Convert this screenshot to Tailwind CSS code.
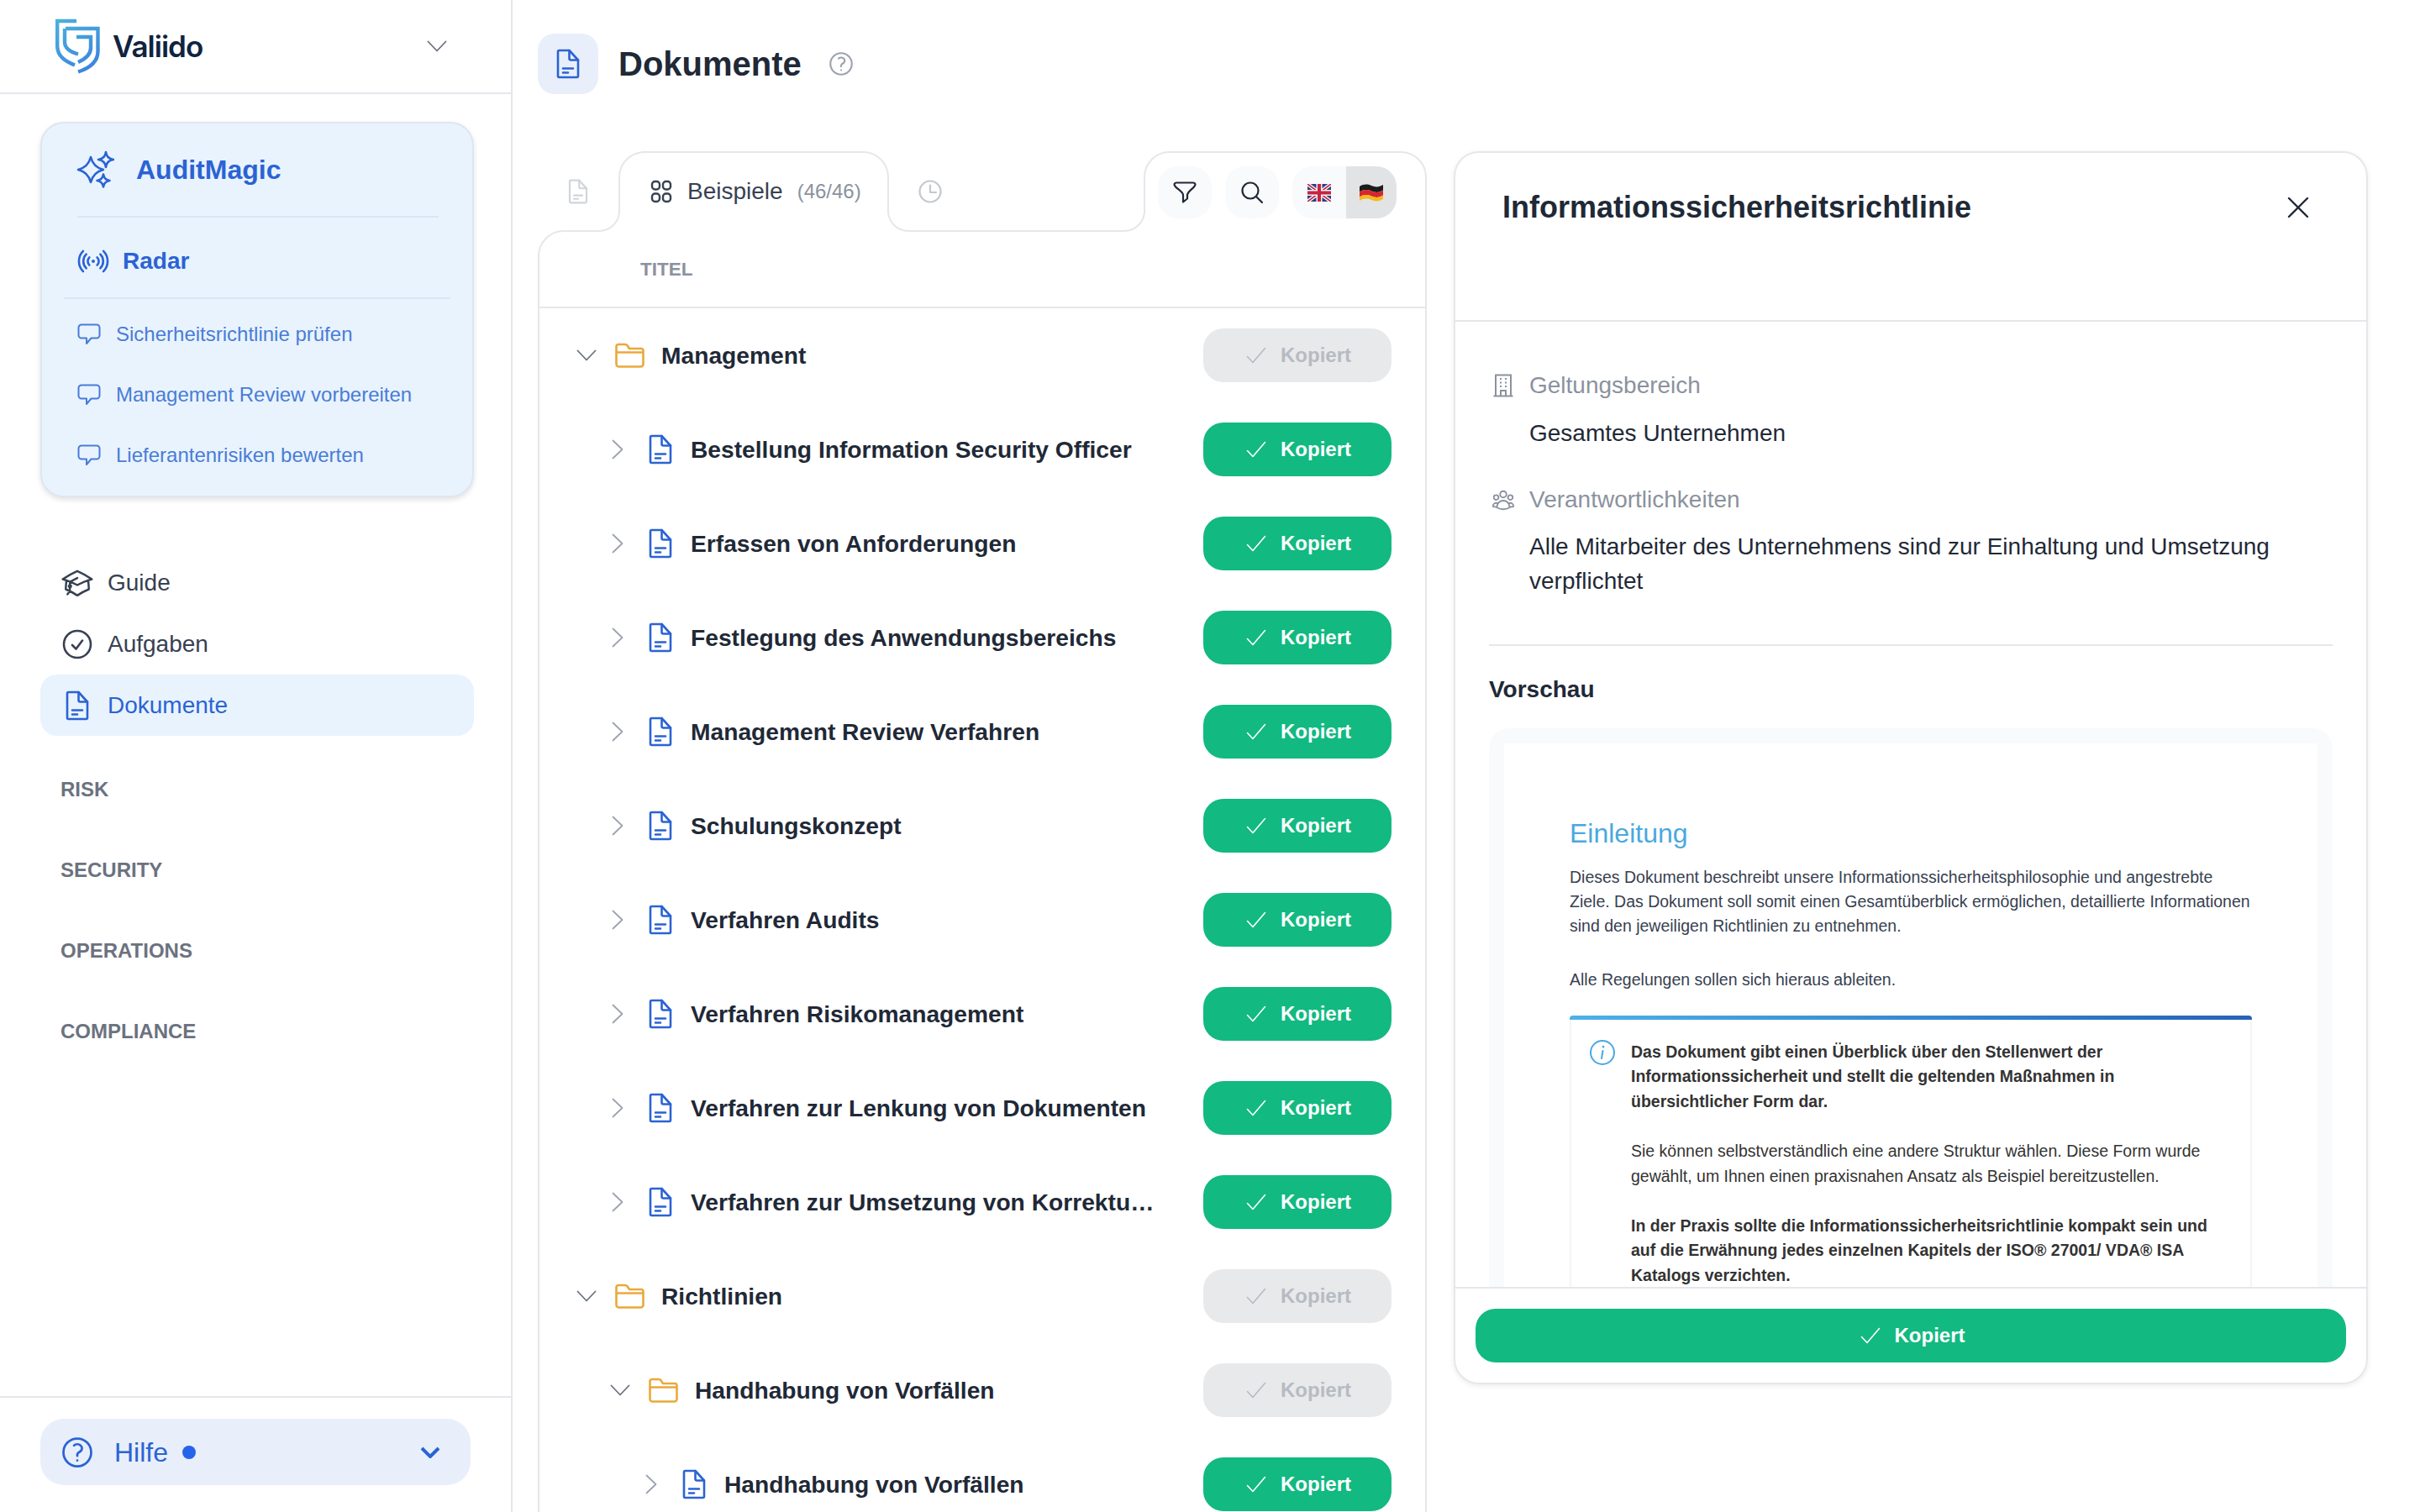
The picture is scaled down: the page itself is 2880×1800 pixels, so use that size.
<!doctype html>
<html lang="de">
<head>
  <meta charset="UTF-8">
  <meta name="viewport" content="width=device-width, initial-scale=1.0">
  <title>Dokumente</title>
  <script src="https://cdn.jsdelivr.net/npm/@tailwindcss/browser@4"></script>
</head>
<body class="h-[1800px] w-[2880px] overflow-hidden bg-white font-['Liberation_Sans',sans-serif] text-[#1f2937]">

<!-- shared icons -->
<svg class="hidden">
  <defs>
    <symbol id="doc" viewBox="0 0 28 36" fill="none" stroke="currentColor" stroke-width="2.6" stroke-linejoin="round" stroke-linecap="round">
      <path d="M3.5 2H15.5L26 13.5V32.5A1.5 1.5 0 0 1 24.5 34H3.5A1.5 1.5 0 0 1 2 32.5V3.5A1.5 1.5 0 0 1 3.5 2Z"/>
      <path d="M15.5 2V11.5A2 2 0 0 0 17.5 13.5H26"/>
      <path d="M8 23.5H20M8 28.5H14"/>
    </symbol>
    <symbol id="folder" viewBox="0 0 35 30" fill="none" stroke="currentColor" stroke-width="2.6" stroke-linejoin="round">
      <path d="M4 2H12A3 3 0 0 1 14.5 3.3L17 7H31A2.5 2.5 0 0 1 33.5 9.5V25.5A3 3 0 0 1 30.5 28.5H4.5A3 3 0 0 1 1.5 25.5V4.5A2.5 2.5 0 0 1 4 2Z"/>
      <path d="M1.5 11.5H33.5"/>
    </symbol>
    <symbol id="tick" viewBox="0 0 24 20" fill="none" stroke="currentColor" stroke-width="1.6" stroke-linecap="round" stroke-linejoin="round">
      <path d="M1.5 11.5L8 18.5L22.5 1.5"/>
    </symbol>
    <symbol id="down" viewBox="0 0 24 14" fill="none" stroke="currentColor" stroke-width="1.8" stroke-linecap="round" stroke-linejoin="round">
      <path d="M1.5 1.5L12 12.5L22.5 1.5"/>
    </symbol>
    <symbol id="right" viewBox="0 0 14 24" fill="none" stroke="currentColor" stroke-width="1.8" stroke-linecap="round" stroke-linejoin="round">
      <path d="M1.5 1.5L12.5 12L1.5 22.5"/>
    </symbol>
    <symbol id="bubble" viewBox="0 0 28 26" fill="none" stroke="currentColor" stroke-width="2" stroke-linejoin="round">
      <path d="M5 1.5H23A3.5 3.5 0 0 1 26.5 5V14A3.5 3.5 0 0 1 23 17.5H16.5L11 24V17.5H5A3.5 3.5 0 0 1 1.5 14V5A3.5 3.5 0 0 1 5 1.5Z"/>
    </symbol>
    <symbol id="question" viewBox="0 0 24 24" fill="none" stroke="currentColor" stroke-width="1.5" stroke-linecap="round" stroke-linejoin="round">
      <path d="M9.879 7.519c1.171-1.025 3.071-1.025 4.242 0 1.172 1.025 1.172 2.687 0 3.712-.203.179-.43.326-.67.442-.745.361-1.45.999-1.45 1.827v.75M21 12a9 9 0 11-18 0 9 9 0 0118 0zm-9 5.25h.008v.008H12v-.008z"/>
    </symbol>
    <clipPath id="flagWave">
      <path d="M0 3C5 0 9 0 14 2S23 4 28 1V18C23 21 19 21 14 19S5 17 0 20Z"/>
    </clipPath>
  </defs>
</svg>

<div class="flex h-[1800px]">

  <!-- sidebar -->
  <aside class="flex h-full w-[610px] shrink-0 flex-col border-r-2 border-[#e5e7eb]">
    <div class="flex h-[112px] shrink-0 items-center border-b-2 border-[#e5e7eb] pl-[66px] pr-[76px]">
      <svg class="h-[66px] w-[53px]" viewBox="0 0 53 66" fill="none" stroke="url(#logoGrad)" stroke-width="4.4">
        <defs>
          <linearGradient id="logoGrad" gradientUnits="userSpaceOnUse" x1="0" y1="0" x2="40" y2="66">
            <stop offset="0" stop-color="#4db2dc"/>
            <stop offset="1" stop-color="#3a82de"/>
          </linearGradient>
        </defs>
        <path d="M25 3H2.2V33C2.2 45 12 51 23 55.5"/>
        <path d="M12 12H50.5V39C50.5 51 41 59 27 63.5"/>
        <path d="M11 12V28C11 36 18 40 27 42.5"/>
        <path d="M25 22H42V35C42 43 36 48 27 52"/>
      </svg>
      <span class="ml-[15px] font-['Inter',sans-serif] text-[35px] font-semibold tracking-[-1px] text-[#0f2440]">Valiido</span>
      <svg class="ml-auto h-[14px] w-[24px] text-[#6b7280]"><use href="#down"/></svg>
    </div>

    <div class="ml-[48px] mr-[44px] mt-[33px] h-[447px] shrink-0 rounded-[28px] border-2 border-[#dfe6f0] bg-[#e8f3fe] text-[#2b63d4] shadow-[0_3px_6px_rgba(0,0,0,0.12)]">
      <div class="ml-[42px] mr-[40px] flex h-[112px] items-center border-b-2 border-[#dbe6f4] pb-[1px]">
        <svg class="-ml-[2px] h-[46px] w-[46px]" viewBox="0 0 46 46" fill="none" stroke="currentColor" stroke-width="2.6" stroke-linejoin="round">
          <path d="M18 8Q21 20 33 23Q21 26 18 38Q15 26 3 23Q15 20 18 8Z"/>
          <path d="M36 2Q37 10 45 11Q37 12 36 20Q35 12 27 11Q35 10 36 2Z"/>
          <path d="M33 28.5Q34 35 40.5 36Q34 37 33 43.5Q32 37 25.5 36Q32 35 33 28.5Z"/>
        </svg>
        <span class="ml-[26px] text-[32px] font-bold">AuditMagic</span>
      </div>
      <div class="mx-[26px] flex h-[97px] items-center border-b-2 border-[#dbe6f4] pl-[14px] pt-[8px]">
        <svg class="h-[42px] w-[42px]" viewBox="0 0 24 24" fill="none" stroke="currentColor" stroke-width="1.5" stroke-linecap="round" stroke-linejoin="round"><path d="M9.348 14.651a3.75 3.75 0 010-5.303m5.304 0a3.75 3.75 0 010 5.303m-7.425 2.122a6.75 6.75 0 010-9.546m9.546 0a6.75 6.75 0 010 9.546M5.106 18.894c-3.808-3.808-3.808-9.98 0-13.789m13.788 0c3.808 3.808 3.808 9.981 0 13.79M12 12h.008v.007H12V12zm.375 0a.375.375 0 11-.75 0 .375.375 0 01.75 0z"/></svg>
        <span class="ml-[14px] text-[28px] font-bold">Radar</span>
      </div>
      <div class="pt-[6px] text-[24px] text-[#4a7cd6]">
        <div class="flex h-[72px] items-center pl-[42px]"><svg class="h-[26px] w-[28px]"><use href="#bubble"/></svg><span class="ml-[18px]">Sicherheitsrichtlinie prüfen</span></div>
        <div class="flex h-[72px] items-center pl-[42px]"><svg class="h-[26px] w-[28px]"><use href="#bubble"/></svg><span class="ml-[18px]">Management Review vorbereiten</span></div>
        <div class="flex h-[72px] items-center pl-[42px]"><svg class="h-[26px] w-[28px]"><use href="#bubble"/></svg><span class="ml-[18px]">Lieferantenrisiken bewerten</span></div>
      </div>
    </div>

    <nav class="ml-[48px] mr-[44px] mt-[65px] text-[28px]">
      <div class="flex h-[73px] items-center text-[#374151]">
        <svg class="ml-[24px] h-[40px] w-[40px]" viewBox="0 0 24 24" fill="none" stroke="currentColor" stroke-width="1.5" stroke-linecap="round" stroke-linejoin="round"><path d="M4.26 10.147a60.436 60.436 0 00-.491 6.347A48.627 48.627 0 0112 20.904a48.627 48.627 0 018.232-4.41 60.46 60.46 0 00-.491-6.347m-15.482 0a50.57 50.57 0 00-2.658-.813A59.905 59.905 0 0112 3.493a59.902 59.902 0 0110.399 5.84c-.896.248-1.783.52-2.658.814m-15.482 0A50.697 50.697 0 0112 13.489a50.702 50.702 0 017.74-3.342M6.75 15a.75.75 0 100-1.5.75.75 0 000 1.5zm0 0v-3.675A55.378 55.378 0 0112 8.443m-7.007 11.55A5.981 5.981 0 006.75 15.75v-1.5"/></svg>
        <span class="ml-[16px]">Guide</span>
      </div>
      <div class="flex h-[73px] items-center text-[#374151]">
        <svg class="ml-[24px] h-[40px] w-[40px]" viewBox="0 0 40 40" fill="none" stroke="currentColor" stroke-width="2.6" stroke-linecap="round" stroke-linejoin="round"><circle cx="20" cy="20" r="16"/><path d="M14 21L18.5 25.5L26 15.5"/></svg>
        <span class="ml-[16px]">Aufgaben</span>
      </div>
      <div class="flex h-[73px] items-center rounded-[20px] bg-[#e8f3fe] text-[#2b63d4]">
        <svg class="ml-[30px] h-[36px] w-[28px]"><use href="#doc"/></svg>
        <span class="ml-[22px]">Dokumente</span>
      </div>
    </nav>

    <div class="mx-[72px] mt-[16px] text-[24px] font-bold text-[#6b7280]">
      <div class="flex h-[96px] items-center">RISK</div>
      <div class="flex h-[96px] items-center">SECURITY</div>
      <div class="flex h-[96px] items-center">OPERATIONS</div>
      <div class="flex h-[96px] items-center">COMPLIANCE</div>
    </div>

    <div class="mt-auto h-[138px] shrink-0 border-t-2 border-[#e5e7eb] pt-[25px]">
      <div class="mx-[48px] flex h-[79px] w-[512px] items-center rounded-[28px] bg-[#e8effb] pl-[22px] pr-[36px] text-[#2b63d4]">
        <svg class="h-[44px] w-[44px]"><use href="#question"/></svg>
        <span class="ml-[22px] text-[32px]">Hilfe</span>
        <span class="ml-[17px] h-[16px] w-[16px] rounded-full bg-[#2563eb]"></span>
        <svg class="ml-auto h-[14px] w-[24px]" viewBox="0 0 24 14" fill="none" stroke="currentColor" stroke-width="4"><path d="M2 2L12 12L22 2"/></svg>
      </div>
    </div>
  </aside>

  <!-- documents -->
  <main class="flex h-full w-[1088px] shrink-0 flex-col pl-[30px]">
    <div class="flex h-[180px] shrink-0 items-start pt-[40px]">
      <div class="flex h-[72px] w-[72px] items-center justify-center rounded-[20px] bg-[#e8effb] text-[#2b63d4]">
        <svg class="h-[36px] w-[28px]"><use href="#doc"/></svg>
      </div>
      <h1 class="ml-[24px] flex h-[72px] items-center text-[40px] font-bold">Dokumente</h1>
      <svg class="ml-[30px] mt-[19px] h-[34px] w-[34px] text-[#9ca3af]"><use href="#question"/></svg>
    </div>

    <div class="relative h-[96px] w-[1058px] shrink-0">
      <svg class="absolute left-0 top-0 h-[188px] w-[1058px]" viewBox="0 0 1058 188" fill="none" stroke="#e5e7eb" stroke-width="2">
        <path d="M1 187V125A30 30 0 0 1 31 95H73A24 24 0 0 0 97 71V31A30 30 0 0 1 127 1H387A30 30 0 0 1 417 31V71A24 24 0 0 0 441 95H698A24 24 0 0 0 722 71V31A30 30 0 0 1 752 1H1027A30 30 0 0 1 1057 31V96"/>
      </svg>
      <div class="relative flex h-full items-center">
        <svg class="ml-[36px] h-[30px] w-[24px] text-[#d1d5db]"><use href="#doc"/></svg>
        <div class="ml-[74px] flex items-center">
          <svg class="h-[28px] w-[26px] text-[#374151]" viewBox="0 0 26 28" fill="none" stroke="currentColor" stroke-width="2.4"><rect x="2" y="2" width="9" height="9.5" rx="3.5"/><rect x="15" y="2" width="9" height="9.5" rx="3.5"/><rect x="2" y="16.5" width="9" height="9.5" rx="3.5"/><rect x="15" y="16.5" width="9" height="9.5" rx="3.5"/></svg>
          <span class="ml-[18px] text-[28px] text-[#374151]">Beispiele</span>
          <span class="ml-[17px] text-[24px] text-[#8b929e]">(46/46)</span>
        </div>
        <svg class="ml-[68px] h-[28px] w-[28px] text-[#c4c8cf]" viewBox="0 0 28 28" fill="none" stroke="currentColor" stroke-width="2.2" stroke-linecap="round" stroke-linejoin="round"><circle cx="14" cy="14" r="12.5"/><path d="M14 6.5V15H21"/></svg>
        <div class="absolute left-[738px] top-[18px] flex gap-[16px]">
          <div class="flex h-[62px] w-[64px] items-center justify-center rounded-[24px] bg-[#f8fafc] text-[#1f2937]">
            <svg class="h-[26px] w-[28px]" viewBox="0 0 28 26" fill="none" stroke="currentColor" stroke-width="2.2" stroke-linejoin="round" stroke-linecap="round"><path d="M4 1.5H24C26 1.5 27 3 26 5C24 9 18 11 17 16V20.5L12 24.5V16C11 11 4 9 2 5C1 3 2 1.5 4 1.5Z"/></svg>
          </div>
          <div class="flex h-[62px] w-[64px] items-center justify-center rounded-[24px] bg-[#f8fafc] text-[#1f2937]">
            <svg class="h-[26px] w-[26px]" viewBox="0 0 26 26" fill="none" stroke="currentColor" stroke-width="2.2" stroke-linecap="round"><circle cx="11" cy="11" r="9.5"/><path d="M18 18L25 25"/></svg>
          </div>
          <div class="flex h-[62px] w-[124px] overflow-hidden rounded-[24px] bg-[#f8fafc]">
            <div class="flex w-[64px] items-center justify-center">
              <svg class="h-[21px] w-[28px]" viewBox="0 0 28 21">
                <g clip-path="url(#flagWave)">
                  <rect width="28" height="21" fill="#2f3d85"/>
                  <path d="M0 0L28 21M28 0L0 21" stroke="#f1f1f5" stroke-width="4.4"/>
                  <path d="M0 0L28 21M28 0L0 21" stroke="#c8243f" stroke-width="1.6"/>
                  <path d="M14 0V21M0 10.5H28" stroke="#f1f1f5" stroke-width="7"/>
                  <path d="M14 0V21M0 10.5H28" stroke="#c8243f" stroke-width="4"/>
                </g>
              </svg>
            </div>
            <div class="flex w-[60px] items-center justify-center bg-[#e2e3e5]">
              <svg class="h-[21px] w-[28px]" viewBox="0 0 28 21">
                <path d="M0 3C5 0 9 0 14 2S23 4 28 1V7.5C23 10.5 19 10.5 14 8.5S5 6.5 0 9.5Z" fill="#1c1c1c"/>
                <path d="M0 9.5C5 6.5 9 6.5 14 8.5S23 10.5 28 7.5V13.5C23 16.5 19 16.5 14 14.5S5 12.5 0 15.5Z" fill="#d8262c"/>
                <path d="M0 15.5C5 12.5 9 12.5 14 14.5S23 16.5 28 13.5V18C23 21 19 21 14 19S5 17 0 20Z" fill="#f6b91e"/>
              </svg>
            </div>
          </div>
        </div>
      </div>
    </div>

    <div class="min-h-0 w-[1058px] flex-1 border-r-2 border-[#e5e7eb]">
      <div class="flex h-[91px] items-center border-b-2 border-[#e5e7eb] pl-[122px] text-[22.5px] font-bold text-[#8b929e]">TITEL</div>

      <div class="border-l-2 border-[#e5e7eb] text-[28.2px] font-bold">
        <div class="flex h-[112px] items-center pl-[44px] pr-[40px]">
          <svg class="h-[14px] w-[24px] text-[#6b7280]"><use href="#down"/></svg>
          <svg class="ml-[22px] h-[30px] w-[35px] text-[#e9a93b]"><use href="#folder"/></svg>
          <span class="ml-[20px]">Management</span>
          <button class="ml-auto flex h-[64px] w-[224px] items-center justify-center rounded-[24px] bg-[#e8e9eb] pl-[3px] text-[24px] font-bold text-[#b6bbc3]"><svg class="mr-[17px] h-[20px] w-[24px]"><use href="#tick"/></svg>Kopiert</button>
        </div>

        <div class="flex h-[112px] items-center pl-[86px] pr-[40px]">
          <svg class="h-[24px] w-[14px] text-[#9ca3af]"><use href="#right"/></svg>
          <svg class="ml-[30px] h-[36px] w-[28px] text-[#2b63d4]"><use href="#doc"/></svg>
          <span class="ml-[22px] w-[558px] truncate">Bestellung Information Security Officer</span>
          <button class="ml-auto flex h-[64px] w-[224px] items-center justify-center rounded-[24px] bg-[#12b981] pl-[3px] text-[24px] font-bold text-white"><svg class="mr-[17px] h-[20px] w-[24px]"><use href="#tick"/></svg>Kopiert</button>
        </div>
        <div class="flex h-[112px] items-center pl-[86px] pr-[40px]">
          <svg class="h-[24px] w-[14px] text-[#9ca3af]"><use href="#right"/></svg>
          <svg class="ml-[30px] h-[36px] w-[28px] text-[#2b63d4]"><use href="#doc"/></svg>
          <span class="ml-[22px] w-[558px] truncate">Erfassen von Anforderungen</span>
          <button class="ml-auto flex h-[64px] w-[224px] items-center justify-center rounded-[24px] bg-[#12b981] pl-[3px] text-[24px] font-bold text-white"><svg class="mr-[17px] h-[20px] w-[24px]"><use href="#tick"/></svg>Kopiert</button>
        </div>
        <div class="flex h-[112px] items-center pl-[86px] pr-[40px]">
          <svg class="h-[24px] w-[14px] text-[#9ca3af]"><use href="#right"/></svg>
          <svg class="ml-[30px] h-[36px] w-[28px] text-[#2b63d4]"><use href="#doc"/></svg>
          <span class="ml-[22px] w-[558px] truncate">Festlegung des Anwendungsbereichs</span>
          <button class="ml-auto flex h-[64px] w-[224px] items-center justify-center rounded-[24px] bg-[#12b981] pl-[3px] text-[24px] font-bold text-white"><svg class="mr-[17px] h-[20px] w-[24px]"><use href="#tick"/></svg>Kopiert</button>
        </div>
        <div class="flex h-[112px] items-center pl-[86px] pr-[40px]">
          <svg class="h-[24px] w-[14px] text-[#9ca3af]"><use href="#right"/></svg>
          <svg class="ml-[30px] h-[36px] w-[28px] text-[#2b63d4]"><use href="#doc"/></svg>
          <span class="ml-[22px] w-[558px] truncate">Management Review Verfahren</span>
          <button class="ml-auto flex h-[64px] w-[224px] items-center justify-center rounded-[24px] bg-[#12b981] pl-[3px] text-[24px] font-bold text-white"><svg class="mr-[17px] h-[20px] w-[24px]"><use href="#tick"/></svg>Kopiert</button>
        </div>
        <div class="flex h-[112px] items-center pl-[86px] pr-[40px]">
          <svg class="h-[24px] w-[14px] text-[#9ca3af]"><use href="#right"/></svg>
          <svg class="ml-[30px] h-[36px] w-[28px] text-[#2b63d4]"><use href="#doc"/></svg>
          <span class="ml-[22px] w-[558px] truncate">Schulungskonzept</span>
          <button class="ml-auto flex h-[64px] w-[224px] items-center justify-center rounded-[24px] bg-[#12b981] pl-[3px] text-[24px] font-bold text-white"><svg class="mr-[17px] h-[20px] w-[24px]"><use href="#tick"/></svg>Kopiert</button>
        </div>
        <div class="flex h-[112px] items-center pl-[86px] pr-[40px]">
          <svg class="h-[24px] w-[14px] text-[#9ca3af]"><use href="#right"/></svg>
          <svg class="ml-[30px] h-[36px] w-[28px] text-[#2b63d4]"><use href="#doc"/></svg>
          <span class="ml-[22px] w-[558px] truncate">Verfahren Audits</span>
          <button class="ml-auto flex h-[64px] w-[224px] items-center justify-center rounded-[24px] bg-[#12b981] pl-[3px] text-[24px] font-bold text-white"><svg class="mr-[17px] h-[20px] w-[24px]"><use href="#tick"/></svg>Kopiert</button>
        </div>
        <div class="flex h-[112px] items-center pl-[86px] pr-[40px]">
          <svg class="h-[24px] w-[14px] text-[#9ca3af]"><use href="#right"/></svg>
          <svg class="ml-[30px] h-[36px] w-[28px] text-[#2b63d4]"><use href="#doc"/></svg>
          <span class="ml-[22px] w-[558px] truncate">Verfahren Risikomanagement</span>
          <button class="ml-auto flex h-[64px] w-[224px] items-center justify-center rounded-[24px] bg-[#12b981] pl-[3px] text-[24px] font-bold text-white"><svg class="mr-[17px] h-[20px] w-[24px]"><use href="#tick"/></svg>Kopiert</button>
        </div>
        <div class="flex h-[112px] items-center pl-[86px] pr-[40px]">
          <svg class="h-[24px] w-[14px] text-[#9ca3af]"><use href="#right"/></svg>
          <svg class="ml-[30px] h-[36px] w-[28px] text-[#2b63d4]"><use href="#doc"/></svg>
          <span class="ml-[22px] w-[558px] truncate">Verfahren zur Lenkung von Dokumenten</span>
          <button class="ml-auto flex h-[64px] w-[224px] items-center justify-center rounded-[24px] bg-[#12b981] pl-[3px] text-[24px] font-bold text-white"><svg class="mr-[17px] h-[20px] w-[24px]"><use href="#tick"/></svg>Kopiert</button>
        </div>
        <div class="flex h-[112px] items-center pl-[86px] pr-[40px]">
          <svg class="h-[24px] w-[14px] text-[#9ca3af]"><use href="#right"/></svg>
          <svg class="ml-[30px] h-[36px] w-[28px] text-[#2b63d4]"><use href="#doc"/></svg>
          <span class="ml-[22px] w-[556px] truncate">Verfahren zur Umsetzung von Korrekturmaßnahmen</span>
          <button class="ml-auto flex h-[64px] w-[224px] items-center justify-center rounded-[24px] bg-[#12b981] pl-[3px] text-[24px] font-bold text-white"><svg class="mr-[17px] h-[20px] w-[24px]"><use href="#tick"/></svg>Kopiert</button>
        </div>

        <div class="flex h-[112px] items-center pl-[44px] pr-[40px]">
          <svg class="h-[14px] w-[24px] text-[#6b7280]"><use href="#down"/></svg>
          <svg class="ml-[22px] h-[30px] w-[35px] text-[#e9a93b]"><use href="#folder"/></svg>
          <span class="ml-[20px]">Richtlinien</span>
          <button class="ml-auto flex h-[64px] w-[224px] items-center justify-center rounded-[24px] bg-[#e8e9eb] pl-[3px] text-[24px] font-bold text-[#b6bbc3]"><svg class="mr-[17px] h-[20px] w-[24px]"><use href="#tick"/></svg>Kopiert</button>
        </div>
        <div class="flex h-[112px] items-center pl-[84px] pr-[40px]">
          <svg class="h-[14px] w-[24px] text-[#6b7280]"><use href="#down"/></svg>
          <svg class="ml-[22px] h-[30px] w-[35px] text-[#e9a93b]"><use href="#folder"/></svg>
          <span class="ml-[20px]">Handhabung von Vorfällen</span>
          <button class="ml-auto flex h-[64px] w-[224px] items-center justify-center rounded-[24px] bg-[#e8e9eb] pl-[3px] text-[24px] font-bold text-[#b6bbc3]"><svg class="mr-[17px] h-[20px] w-[24px]"><use href="#tick"/></svg>Kopiert</button>
        </div>
        <div class="flex h-[112px] items-center pl-[126px] pr-[40px]">
          <svg class="h-[24px] w-[14px] text-[#9ca3af]"><use href="#right"/></svg>
          <svg class="ml-[30px] h-[36px] w-[28px] text-[#2b63d4]"><use href="#doc"/></svg>
          <span class="ml-[22px]">Handhabung von Vorfällen</span>
          <button class="ml-auto flex h-[64px] w-[224px] items-center justify-center rounded-[24px] bg-[#12b981] pl-[3px] text-[24px] font-bold text-white"><svg class="mr-[17px] h-[20px] w-[24px]"><use href="#tick"/></svg>Kopiert</button>
        </div>
      </div>
    </div>
  </main>

  <!-- detail panel -->
  <section class="ml-[32px] mt-[180px] flex h-[1468px] w-[1088px] shrink-0 flex-col overflow-hidden rounded-[30px] border-2 border-[#e5e7eb] shadow-[0_2px_6px_rgba(0,0,0,0.08)]">
    <div class="flex h-[201px] shrink-0 items-start justify-between border-b-2 border-[#e5e7eb] pl-[56px] pr-[68px] pt-[42px]">
      <h2 class="text-[36px] font-bold leading-[46px]">Informationssicherheitsrichtlinie</h2>
      <svg class="mt-[10px] h-[26px] w-[26px] text-[#1f2937]" viewBox="0 0 26 26" fill="none" stroke="currentColor" stroke-width="2.4" stroke-linecap="round"><path d="M2 2L24 24M24 2L2 24"/></svg>
    </div>

    <div class="min-h-0 flex-1 overflow-hidden px-[40px] pt-[56px]">
      <div class="flex h-[40px] items-center text-[28px] text-[#8b929e]">
        <svg class="ml-[5px] h-[28px] w-[24px]" viewBox="0 0 24 28" fill="none" stroke="currentColor" stroke-width="2"><path d="M3 1.5H21V26.5H3ZM0.5 26.5H23.5M9 26.5V20H15V26.5"/><path d="M8 6H10M14 6H16M8 10.5H10M14 10.5H16M8 15H10M14 15H16"/></svg>
        <span class="ml-[19px]">Geltungsbereich</span>
      </div>
      <p class="ml-[48px] mt-[17px] text-[28px] leading-[40px] text-[#1f2937]">Gesamtes Unternehmen</p>
      <div class="mt-[39px] flex h-[40px] items-center text-[28px] text-[#8b929e]">
        <svg class="ml-[2px] h-[30px] w-[30px]" viewBox="0 0 24 24" fill="none" stroke="currentColor" stroke-width="1.5" stroke-linecap="round" stroke-linejoin="round"><path d="M18 18.72a9.094 9.094 0 003.741-.479 3 3 0 00-4.682-2.72m.94 3.198l.001.031c0 .225-.012.447-.037.666A11.944 11.944 0 0112 21c-2.17 0-4.207-.576-5.963-1.584A6.062 6.062 0 016 18.719m12 0a5.971 5.971 0 00-.941-3.197m0 0A5.995 5.995 0 0012 12.75a5.995 5.995 0 00-5.058 2.772m0 0a3 3 0 00-4.681 2.72 8.986 8.986 0 003.74.477m.94-3.197a5.971 5.971 0 00-.94 3.197M15 6.75a3 3 0 11-6 0 3 3 0 016 0zm6 3a2.25 2.25 0 11-4.5 0 2.25 2.25 0 014.5 0zm-13.5 0a2.25 2.25 0 11-4.5 0 2.25 2.25 0 014.5 0z"/></svg>
        <span class="ml-[16px]">Verantwortlichkeiten</span>
      </div>
      <p class="ml-[48px] mt-[15px] text-[28px] leading-[41px] text-[#1f2937]">Alle Mitarbeiter des Unternehmens sind zur Einhaltung und Umsetzung verpflichtet</p>

      <div class="mt-[55px] border-t-2 border-[#e5e7eb]"></div>
      <h3 class="mt-[32px] text-[28px] font-bold leading-[40px]">Vorschau</h3>

      <div class="mt-[26px] rounded-t-[24px] bg-[#f8fafc] px-[18px] pt-[18px]">
        <div class="bg-white px-[78px] pb-[30px] pt-[87px]">
          <h4 class="text-[32px] leading-[40px] text-[#4aa8e0]">Einleitung</h4>
          <p class="mt-[18px] text-[19.5px] leading-[29px] text-[#374151]">Dieses Dokument beschreibt unsere Informationssicherheitsphilosophie und angestrebte Ziele. Das Dokument soll somit einen Gesamtüberblick ermöglichen, detaillierte Informationen sind den jeweiligen Richtlinien zu entnehmen.</p>
          <p class="mt-[35px] text-[19.5px] leading-[29px] text-[#374151]">Alle Regelungen sollen sich hieraus ableiten.</p>
          <div class="mt-[28px] rounded-t-[4px] border-x-2 border-[#f3f4f6] text-[19.5px] leading-[29.4px] text-[#333]">
            <div class="-mx-[2px] h-[5px] rounded-t-[4px] bg-gradient-to-r from-[#4db1e8] to-[#2563b8]"></div>
            <div class="flex pl-[21px] pr-[30px] pt-[24px]">
              <svg class="mt-[-1px] h-[32px] w-[32px] shrink-0 text-[#4aa8e0]" viewBox="0 0 32 32" fill="none" stroke="currentColor" stroke-width="2"><circle cx="16" cy="16" r="14"/><path d="M16.5 14L15 23" stroke-linecap="round"/><path d="M17 9V9.2" stroke-linecap="round" stroke-width="2.6"/></svg>
              <div class="ml-[18px]">
                <p class="font-bold">Das Dokument gibt einen Überblick über den Stellenwert der Informationssicherheit und stellt die geltenden Maßnahmen in übersichtlicher Form dar.</p>
                <p class="mt-[30px]">Sie können selbstverständlich eine andere Struktur wählen. Diese Form wurde gewählt, um Ihnen einen praxisnahen Ansatz als Beispiel bereitzustellen.</p>
                <p class="mt-[30px] font-bold">In der Praxis sollte die Informationssicherheitsrichtlinie kompakt sein und auf die Erwähnung jedes einzelnen Kapitels der ISO® 27001/ VDA® ISA Katalogs verzichten.</p>
              </div>
            </div>
          </div>
        </div>
      </div>
    </div>

    <div class="flex h-[114px] shrink-0 items-start border-t-2 border-[#e5e7eb] px-[24px] pt-[24px]">
      <button class="flex h-[64px] w-full items-center justify-center rounded-[24px] bg-[#12b981] pl-[4px] text-[24px] font-bold text-white"><svg class="mr-[17px] h-[20px] w-[24px]"><use href="#tick"/></svg>Kopiert</button>
    </div>
  </section>
</div>
</body>
</html>
